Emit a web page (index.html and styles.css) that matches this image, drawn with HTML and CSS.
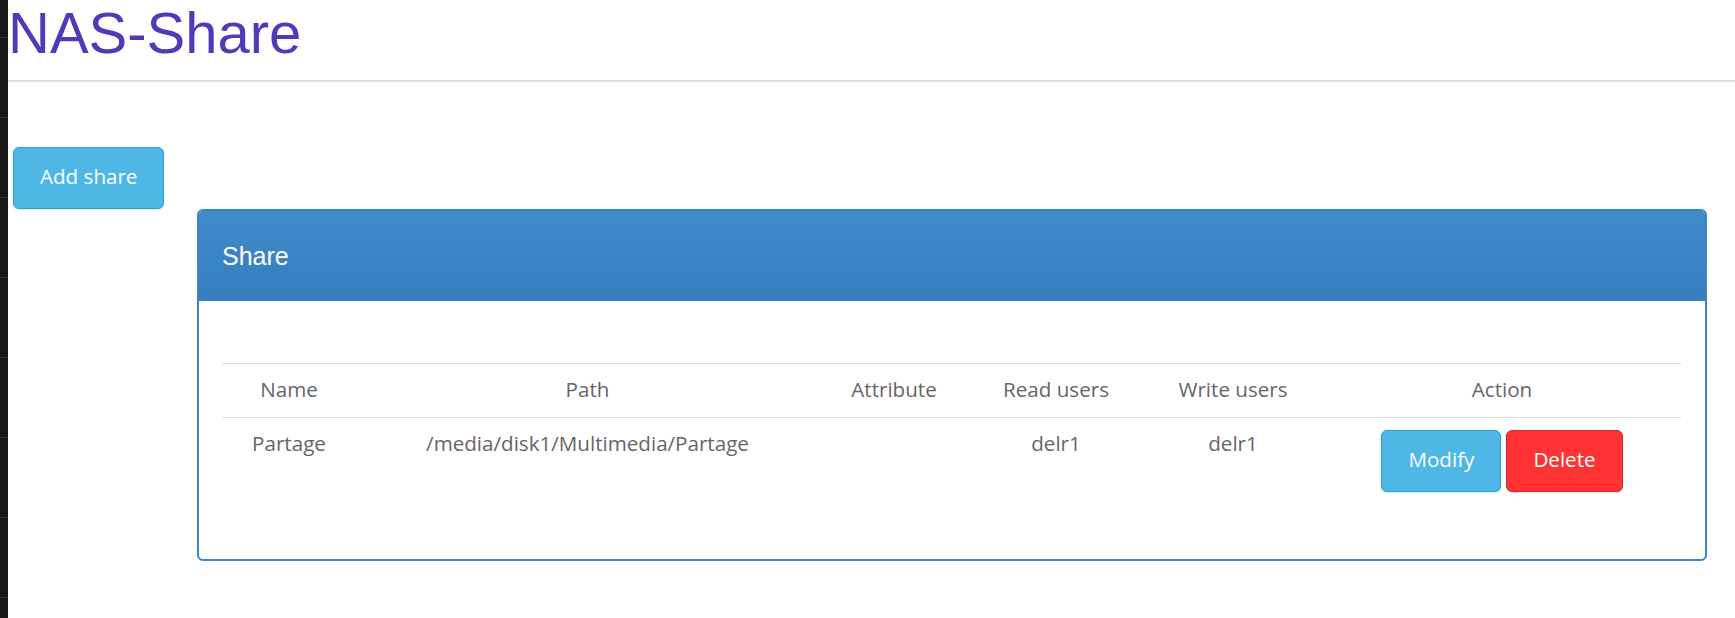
FILE: index.html
```html
<!DOCTYPE html>
<html lang="en">
<head>
<meta charset="utf-8">
<title>NAS-Share</title>
<link rel="stylesheet" href="styles.css">
</head>
<body>
<div class="strip"></div>
<div class="main">
  <header class="page-header">
    <h1 class="title">NAS-Share</h1>
  </header>
  <div class="toolbar">
    <button class="btn btn-info">Add share</button>
  </div>
  <section class="panel">
    <div class="panel-heading">Share</div>
    <div class="panel-body">
      <table class="shares">
        <thead>
          <tr>
            <th class="c-name">Name</th>
            <th class="c-path">Path</th>
            <th class="c-attr">Attribute</th>
            <th class="c-read">Read users</th>
            <th class="c-write">Write users</th>
            <th class="c-action">Action</th>
          </tr>
        </thead>
        <tbody>
          <tr>
            <td>Partage</td>
            <td>/media/disk1/Multimedia/Partage</td>
            <td></td>
            <td>delr1</td>
            <td>delr1</td>
            <td>
              <div class="actions">
                <button class="btn btn-info">Modify</button>
                <button class="btn btn-danger">Delete</button>
              </div>
            </td>
          </tr>
        </tbody>
      </table>
    </div>
  </section>
</div>
</body>
</html>
```

FILE: styles.css
```css
html, body {
  margin: 0;
  padding: 0;
  background: #fff;
}

body {
  display: flex;
  min-height: 618px;
  font-family: "Open Sans", "Liberation Sans", sans-serif;
  color: #666;
}

.strip {
  width: 8px;
  flex: none;
  background-color: #181818;
  background-image: repeating-linear-gradient(to bottom,
    #181818 0px, #181818 37px, #333 37px, #333 38px, #181818 38px, #181818 80px);
}

.main {
  flex: 1;
  min-width: 0;
}

.page-header {
  height: 80px;
  border-bottom: 2px solid #dcdcdc;
}

.title {
  margin: 0;
  font-family: "Liberation Sans", Arial, sans-serif;
  font-weight: normal;
  font-size: 58px;
  line-height: 66px;
  color: #4e3bb7;
}

.toolbar {
  margin-top: 65px;
  padding-left: 5px;
}

.btn {
  font-family: "Open Sans", sans-serif;
  font-size: 20.6px;
  line-height: 30px;
  padding: 13px 26px 17px;
  border: 1px solid;
  border-radius: 6px;
  color: #fff;
  box-shadow: 0 1px 2px rgba(0, 0, 0, 0.12);
  cursor: pointer;
}

.btn-info {
  background: #4fb7e6;
  border-color: #26a3cc;
}

.btn-danger {
  background: #ff3333;
  border-color: #c52f2f;
}

.panel {
  margin: 0 28px 0 189px;
  border: 2px solid #3d86c6;
  border-radius: 6px;
  overflow: hidden;
}

.panel-heading {
  height: 90px;
  display: flex;
  align-items: center;
  padding-left: 23px;
  background: linear-gradient(to bottom, #428bca 0%, #357ebd 100%);
  color: #fff;
  font-family: "Liberation Sans", Arial, sans-serif;
  font-size: 25px;
}

.panel-body {
  padding: 62px 24px 57px 23px;
}

.shares {
  width: 100%;
  border-collapse: collapse;
  table-layout: fixed;
  font-size: 20.6px;
  line-height: 30px;
}

.shares th,
.shares td {
  box-sizing: border-box;
  text-align: center;
  vertical-align: top;
  font-weight: normal;
}

.shares th {
  padding: 10px 0 13px;
  border-top: 1px solid #dddddd;
  border-bottom: 1px solid #dddddd;
}

.shares td {
  padding: 10px 0;
}

.c-name { width: 134px; }
.c-path { width: 463px; }
.c-attr { width: 150px; }
.c-read { width: 174px; }
.c-write { width: 180px; }

.actions {
  display: flex;
  justify-content: center;
  gap: 5px;
  margin-top: 2px;
}
```
